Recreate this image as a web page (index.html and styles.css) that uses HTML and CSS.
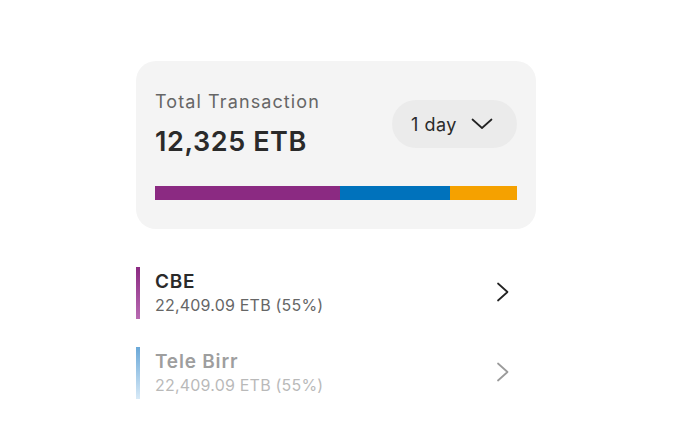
FILE: index.html
```html
<!DOCTYPE html>
<html lang="en">
<head>
    <meta charset="UTF-8">
    <meta name="viewport" content="width=device-width, initial-scale=1.0">
    <title>Total Transaction</title>
    <link rel="stylesheet" href="styles.css">
</head>
<body>
    <div class="container">
        <div class="summary-card">
            <div class="summary-top">
                <div class="summary-text">
                    <p class="label">Total Transaction</p>
                    <p class="total">12,325 ETB</p>
                </div>
                <button class="period-button">
                    <span>1 day</span>
                    <svg width="22" height="12" viewBox="0 0 22 12" fill="none">
                        <path d="M1.5 1.5 L11 10 L20.5 1.5" stroke="#222" stroke-width="1.7" stroke-linecap="round" stroke-linejoin="round"/>
                    </svg>
                </button>
            </div>
            <div class="share-bar">
                <div class="share cbe" style="width: 185px"></div>
                <div class="share telebirr" style="width: 110px"></div>
                <div class="share other"></div>
            </div>
        </div>

        <div class="bank-list">
            <div class="bank-row">
                <div class="bank-marker cbe-marker"></div>
                <div class="bank-info">
                    <p class="bank-name">CBE</p>
                    <p class="bank-amount">22,409.09 ETB (55%)</p>
                </div>
                <svg class="chevron" width="14" height="20" viewBox="0 0 14 20" fill="none">
                    <path d="M2 1.5 L11.5 10 L2 18.5" stroke="#222" stroke-width="1.7" stroke-linecap="round" stroke-linejoin="round"/>
                </svg>
            </div>
            <div class="bank-row faded">
                <div class="bank-marker telebirr-marker"></div>
                <div class="bank-info">
                    <p class="bank-name">Tele Birr</p>
                    <p class="bank-amount">22,409.09 ETB (55%)</p>
                </div>
                <svg class="chevron" width="14" height="20" viewBox="0 0 14 20" fill="none">
                    <path d="M2 1.5 L11.5 10 L2 18.5" stroke="#222" stroke-width="1.7" stroke-linecap="round" stroke-linejoin="round"/>
                </svg>
            </div>
        </div>
    </div>
</body>
</html>
```

FILE: styles.css
```css
body {
    font-family: Inter, "Noto Sans", sans-serif;
    background-color: #ffffff;
    margin: 0;
    padding: 0;
}
.container {
    width: 400px;
    margin-left: 136px;
    padding-top: 61px;
}
p {
    margin: 0;
}
.summary-card {
    background: #f4f4f4;
    border-radius: 20px;
    padding: 30px 19px 28px 19px;
    height: 110px;
}
.summary-top {
    display: flex;
    justify-content: space-between;
    align-items: flex-start;
}
.label {
    font-size: 18px;
    letter-spacing: 1.1px;
    color: #666666;
    line-height: 22px;
}
.total {
    margin-top: 12px;
    font-size: 27px;
    font-weight: 600;
    letter-spacing: 0.6px;
    color: #2a2a2a;
    line-height: 34px;
}
.period-button {
    margin-top: 9px;
    width: 125px;
    height: 48px;
    border: none;
    border-radius: 24px;
    background: #ebebeb;
    font-family: inherit;
    font-size: 18px;
    letter-spacing: 0.5px;
    color: #2a2a2a;
    display: flex;
    align-items: center;
    justify-content: flex-start;
    gap: 14px;
    padding: 0 0 0 19px;
}
.share-bar {
    display: flex;
    height: 14px;
    margin-top: 27px;
}
.share.cbe {
    background: #8b2a82;
}
.share.telebirr {
    background: #0072bc;
}
.share.other {
    flex: 1;
    background: #f5a100;
}
.bank-list {
    margin-top: 38px;
    display: flex;
    flex-direction: column;
    gap: 28px;
}
.bank-row {
    display: flex;
    align-items: center;
    height: 52px;
}
.bank-marker {
    width: 4px;
    height: 52px;
    margin-right: 15px;
}
.cbe-marker {
    background: linear-gradient(#8b2a82, #b86bb2);
}
.telebirr-marker {
    background: linear-gradient(#6aa8d8, #d8eaf7);
}
.bank-info {
    flex: 1;
}
.bank-name {
    font-size: 19px;
    font-weight: 600;
    letter-spacing: 0.8px;
    color: #2a2a2a;
    line-height: 24px;
}
.bank-amount {
    font-size: 16px;
    letter-spacing: 0.2px;
    color: #666666;
    line-height: 22px;
}
.chevron {
    margin-right: 26px;
    margin-top: -2px;
}
.faded .bank-info,
.faded .chevron {
    opacity: 0.45;
}
```
